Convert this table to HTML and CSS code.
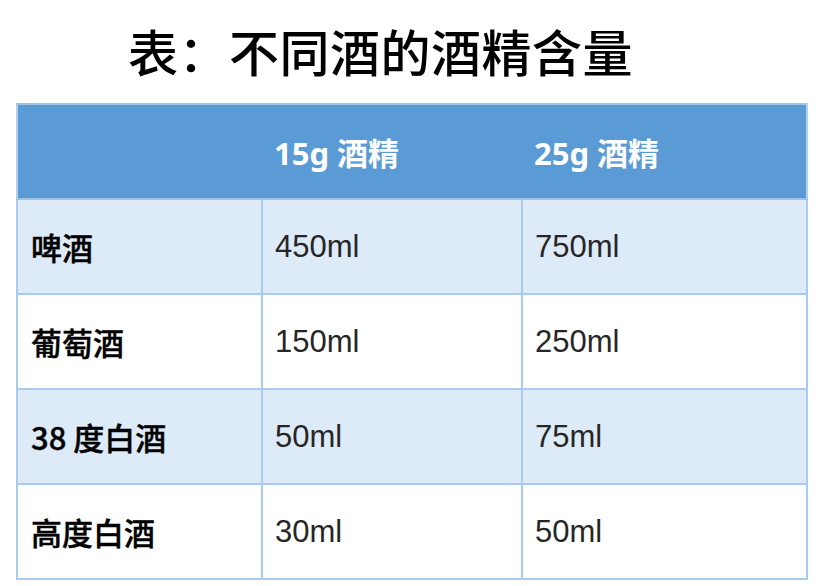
FILE: index.html
```html
<!DOCTYPE html>
<html lang="zh">
<head>
<meta charset="utf-8">
<link rel="stylesheet" href="styles.css">
</head>
<body>
<div class="page">
  <h1 class="title">表：不同酒的酒精含量</h1>
  <table class="grid">
    <thead>
      <tr>
        <th class="c1"></th>
        <th class="c2">15g 酒精</th>
        <th class="c3">25g 酒精</th>
      </tr>
    </thead>
    <tbody>
      <tr class="band">
        <td class="name">啤酒</td>
        <td>450ml</td>
        <td>750ml</td>
      </tr>
      <tr>
        <td class="name">葡萄酒</td>
        <td>150ml</td>
        <td>250ml</td>
      </tr>
      <tr class="band">
        <td class="name">38 度白酒</td>
        <td>50ml</td>
        <td>75ml</td>
      </tr>
      <tr>
        <td class="name">高度白酒</td>
        <td>30ml</td>
        <td>50ml</td>
      </tr>
    </tbody>
  </table>
</div>
</body>
</html>
```

FILE: styles.css
```css
html, body {
  margin: 0;
  padding: 0;
  background: #ffffff;
}
.page {
  width: 829px;
  height: 586px;
  padding: 0 0 0 16px;
  box-sizing: border-box;
  font-family: "Liberation Sans", "Noto Sans CJK SC", sans-serif;
}
.title {
  margin: 0;
  padding: 21px 0 0 112px;
  height: 103px;
  box-sizing: border-box;
  font-family: "Noto Sans CJK SC", sans-serif;
  font-weight: 500;
  font-size: 50px;
  line-height: 58px;
  color: #000;
  letter-spacing: 0.5px;
}
.grid {
  border-collapse: collapse;
  width: 790px;
  table-layout: fixed;
}
.grid th, .grid td {
  height: 95px;
  padding: 0 0 0 12px;
  text-align: left;
  vertical-align: middle;
  box-sizing: border-box;
}
.grid thead th {
  background: #5b9bd5;
  color: #ffffff;
  font-weight: bold;
  font-size: 31px;
  font-family: "Noto Sans", "Noto Sans CJK SC", sans-serif;
  border: 2px solid #9dc3e6;
  border-left: none;
  border-right: none;
}
.grid thead th.c1 { border-left: 2px solid #b4d0ee; }
.grid thead th.c3 { border-right: 2px solid #b4d0ee; }
.c1 { width: 245px; }
.c2 { width: 260px; }
.c3 { width: 285px; }
.grid td {
  border: 2px solid #a9cbed;
  font-size: 31px;
  color: #262626;
  background: #ffffff;
}
.grid tr.band td {
  background: #ddeaf7;
}
.grid td.name {
  font-family: "Noto Sans CJK SC", sans-serif;
  font-weight: 500;
  font-size: 31px;
  color: #000;
  padding-left: 13px;
  -webkit-text-stroke: 0.4px #000;
}
```
